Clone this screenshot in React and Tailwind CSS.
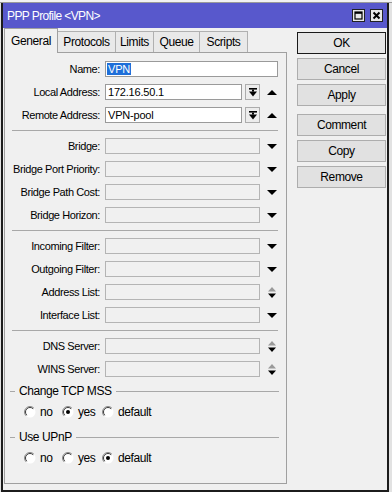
import React from 'react';

const FONT = "font-['Liberation_Sans',Arial,sans-serif]";

function DownTri() {
  return (
    <svg width="10" height="5" viewBox="0 0 10 5">
      <polygon points="0,0 10,0 5,5" fill="#000" />
    </svg>
  );
}

function UpTri() {
  return (
    <svg width="10" height="5" viewBox="0 0 10 5">
      <polygon points="0,5 10,5 5,0" fill="#000" />
    </svg>
  );
}

function UpDown() {
  return (
    <svg width="8" height="11" viewBox="0 0 8 11">
      <polygon points="0,4.5 8,4.5 4,0" fill="#9a9a9a" />
      <polygon points="0,6.5 8,6.5 4,11" fill="#000" />
    </svg>
  );
}

function DropBtn() {
  return (
    <div className="w-[15px] h-[16px] border border-[#acacac] bg-[#ececec] flex items-center justify-center">
      <svg width="8" height="9" viewBox="0 0 8 9">
        <rect x="0" y="0" width="8" height="1.6" fill="#000" />
        <rect x="3" y="1.6" width="2" height="2" fill="#000" />
        <polygon points="0,3.5 8,3.5 4,8.5" fill="#000" />
      </svg>
    </div>
  );
}

function Radio({ checked }) {
  return (
    <svg width="12" height="12" viewBox="0 0 12 12">
      <circle cx="6" cy="6" r="5.5" fill="#fff" />
      <path d="M 9.9 2.1 A 5.5 5.5 0 0 0 2.1 9.9" fill="none" stroke="#8a8a8a" strokeWidth="1" />
      <path d="M 9.2 2.8 A 4.5 4.5 0 0 0 2.8 9.2" fill="none" stroke="#3a3a3a" strokeWidth="1" />
      {checked && <circle cx="6" cy="6" r="2" fill="#000" />}
    </svg>
  );
}

function Row({ label, value, enabled, kind }) {
  return (
    <div className="flex items-center h-[16px]">
      <div className="w-[95px] text-right whitespace-nowrap tracking-[-0.4px]">{label}</div>
      <div className="ml-[5px] w-[155px] flex gap-[3px] h-[16px]">
        <div
          className={`flex-1 h-[16px] border flex items-center pl-[2px] tracking-[-0.2px] ${
            enabled ? 'bg-white border-[#9a9a9a]' : 'bg-[#f0f0f0] border-[#b4b4b4]'
          }`}
        >
          {value}
        </div>
        {kind === 'drop' && <DropBtn />}
      </div>
      <div className="ml-[2px] w-[20px] flex items-center justify-center">
        {kind === 'drop' && <UpTri />}
        {kind === 'down' && <DownTri />}
        {kind === 'updown' && <UpDown />}
      </div>
    </div>
  );
}

function Sep() {
  return <div className="ml-[7px] mr-[8px] h-px bg-[#a8a8a8]" />;
}

function Group({ title, className = '' }) {
  return (
    <div className={`flex items-center h-[14px] ${className}`}>
      <div className="ml-[5px] w-[5px] h-px bg-[#a8a8a8]" />
      <div className="px-[4px] text-[12px] tracking-[-0.4px] whitespace-nowrap">{title}</div>
      <div className="flex-1 mr-[7px] h-px bg-[#a8a8a8]" />
    </div>
  );
}

function Radios({ value }) {
  const items = [
    ['no', 'w-[38px]'],
    ['yes', 'w-[40px]'],
    ['default', 'w-[60px]'],
  ];
  return (
    <div className="flex items-center h-[13px] pl-[19px]">
      {items.map(([k, w]) => (
        <div key={k} className={`flex items-center gap-[4px] ${w}`}>
          <Radio checked={value === k} />
          <span className="text-[12px] tracking-[-0.4px]">{k}</span>
        </div>
      ))}
    </div>
  );
}

const tabs = [
  ['General', 'w-[54px]'],
  ['Protocols', 'w-[58px]'],
  ['Limits', 'w-[38px]'],
  ['Queue', 'w-[46px]'],
  ['Scripts', 'w-[48px]'],
];

const buttons = ['OK', 'Cancel', 'Apply', 'Comment', 'Copy', 'Remove'];

export default function App() {
  return (
    <div className={`w-[392px] h-[492px] bg-[#e2e2e2] overflow-hidden text-[11px] text-black ${FONT}`}>
      <div className="h-[3px] bg-[#f2f2f2] border-b border-[#9a9a9a]" />
      <div className="ml-[1px] w-[388px] h-[489px] flex flex-col bg-[#f0f0f0] border-x-2 border-b-2 border-[#1c1c1c]">
        {/* title bar */}
        <div className="h-[25px] bg-[#5858cc] flex items-center pl-[4px] pr-[4px]">
          <span className="text-white text-[12px] tracking-[-0.6px] flex-1">PPP Profile &lt;VPN&gt;</span>
          <div className="flex gap-[5px]">
            <svg width="13" height="13" viewBox="0 0 13 13">
              <rect x="0.5" y="0.5" width="12" height="12" fill="#e8e8e8" stroke="#222" />
              <rect x="3" y="3" width="7" height="7" fill="none" stroke="#000" strokeWidth="1.2" />
              <rect x="3" y="3" width="7" height="1.8" fill="#000" />
            </svg>
            <svg width="13" height="13" viewBox="0 0 13 13">
              <rect x="0.5" y="0.5" width="12" height="12" fill="#e8e8e8" stroke="#222" />
              <path d="M3.5 3.5 L9.5 9.5 M9.5 3.5 L3.5 9.5" stroke="#000" strokeWidth="2" />
            </svg>
          </div>
        </div>

        <div className="flex">
          {/* left: tabs + panel */}
          <div className="ml-[1px] w-[283px] flex flex-col">
            <div className="relative z-10 h-[25px] -mb-px flex">
              {tabs.map(([t, w], i) =>
                i === 0 ? (
                  <div
                    key={t}
                    className={`${w} h-[25px] bg-[#f0f0f0] border-x border-t border-[#a0a0a0] flex items-center justify-center text-[12px] tracking-[-0.4px]`}
                  >
                    {t}
                  </div>
                ) : (
                  <div
                    key={t}
                    className={`${w} h-[21px] mt-[3px] bg-[#e9e9e9] border-r border-t border-[#b0b0b0] flex items-center justify-center text-[12px] tracking-[-0.4px]`}
                  >
                    {t}
                  </div>
                )
              )}
            </div>
            <div className="h-[432px] border border-[#a0a0a0] pt-[8px] flex flex-col gap-[7px]">
              <div className="flex items-center h-[16px]">
                <div className="w-[95px] text-right tracking-[-0.4px]">Name:</div>
                <div className="ml-[5px] w-[173px] h-[16px] bg-white border border-[#9a9a9a] flex items-center pl-px">
                  <span className="bg-[#1e6fd9] text-white leading-[12px] px-px tracking-[-0.2px]">VPN</span>
                </div>
              </div>
              <Row label="Local Address:" value="172.16.50.1" enabled kind="drop" />
              <Row label="Remote Address:" value="VPN-pool" enabled kind="drop" />
              <Sep />
              <Row label="Bridge:" kind="down" />
              <Row label="Bridge Port Priority:" kind="down" />
              <Row label="Bridge Path Cost:" kind="down" />
              <Row label="Bridge Horizon:" kind="down" />
              <Sep />
              <Row label="Incoming Filter:" kind="down" />
              <Row label="Outgoing Filter:" kind="down" />
              <Row label="Address List:" kind="updown" />
              <Row label="Interface List:" kind="down" />
              <Sep />
              <Row label="DNS Server:" kind="updown" />
              <Row label="WINS Server:" kind="updown" />
              <Group title="Change TCP MSS" />
              <Radios value="yes" />
              <Group title="Use UPnP" className="mt-[5px]" />
              <Radios value="default" />
            </div>
          </div>

          {/* right: buttons */}
          <div className="ml-[10px] w-[89px] mt-[4px] flex flex-col gap-[4px]">
            {buttons.map((b) => (
              <div
                key={b}
                className={`h-[22px] flex items-center justify-center text-[12px] tracking-[-0.4px] ${
                  b === 'OK' ? 'border border-[#1a1a1a] bg-[#e5e5e5]' : 'border border-[#adadad] bg-[#e1e1e1]'
                } ${b === 'Comment' ? 'mt-[4px]' : ''}`}
              >
                {b}
              </div>
            ))}
          </div>
        </div>
      </div>
    </div>
  );
}
